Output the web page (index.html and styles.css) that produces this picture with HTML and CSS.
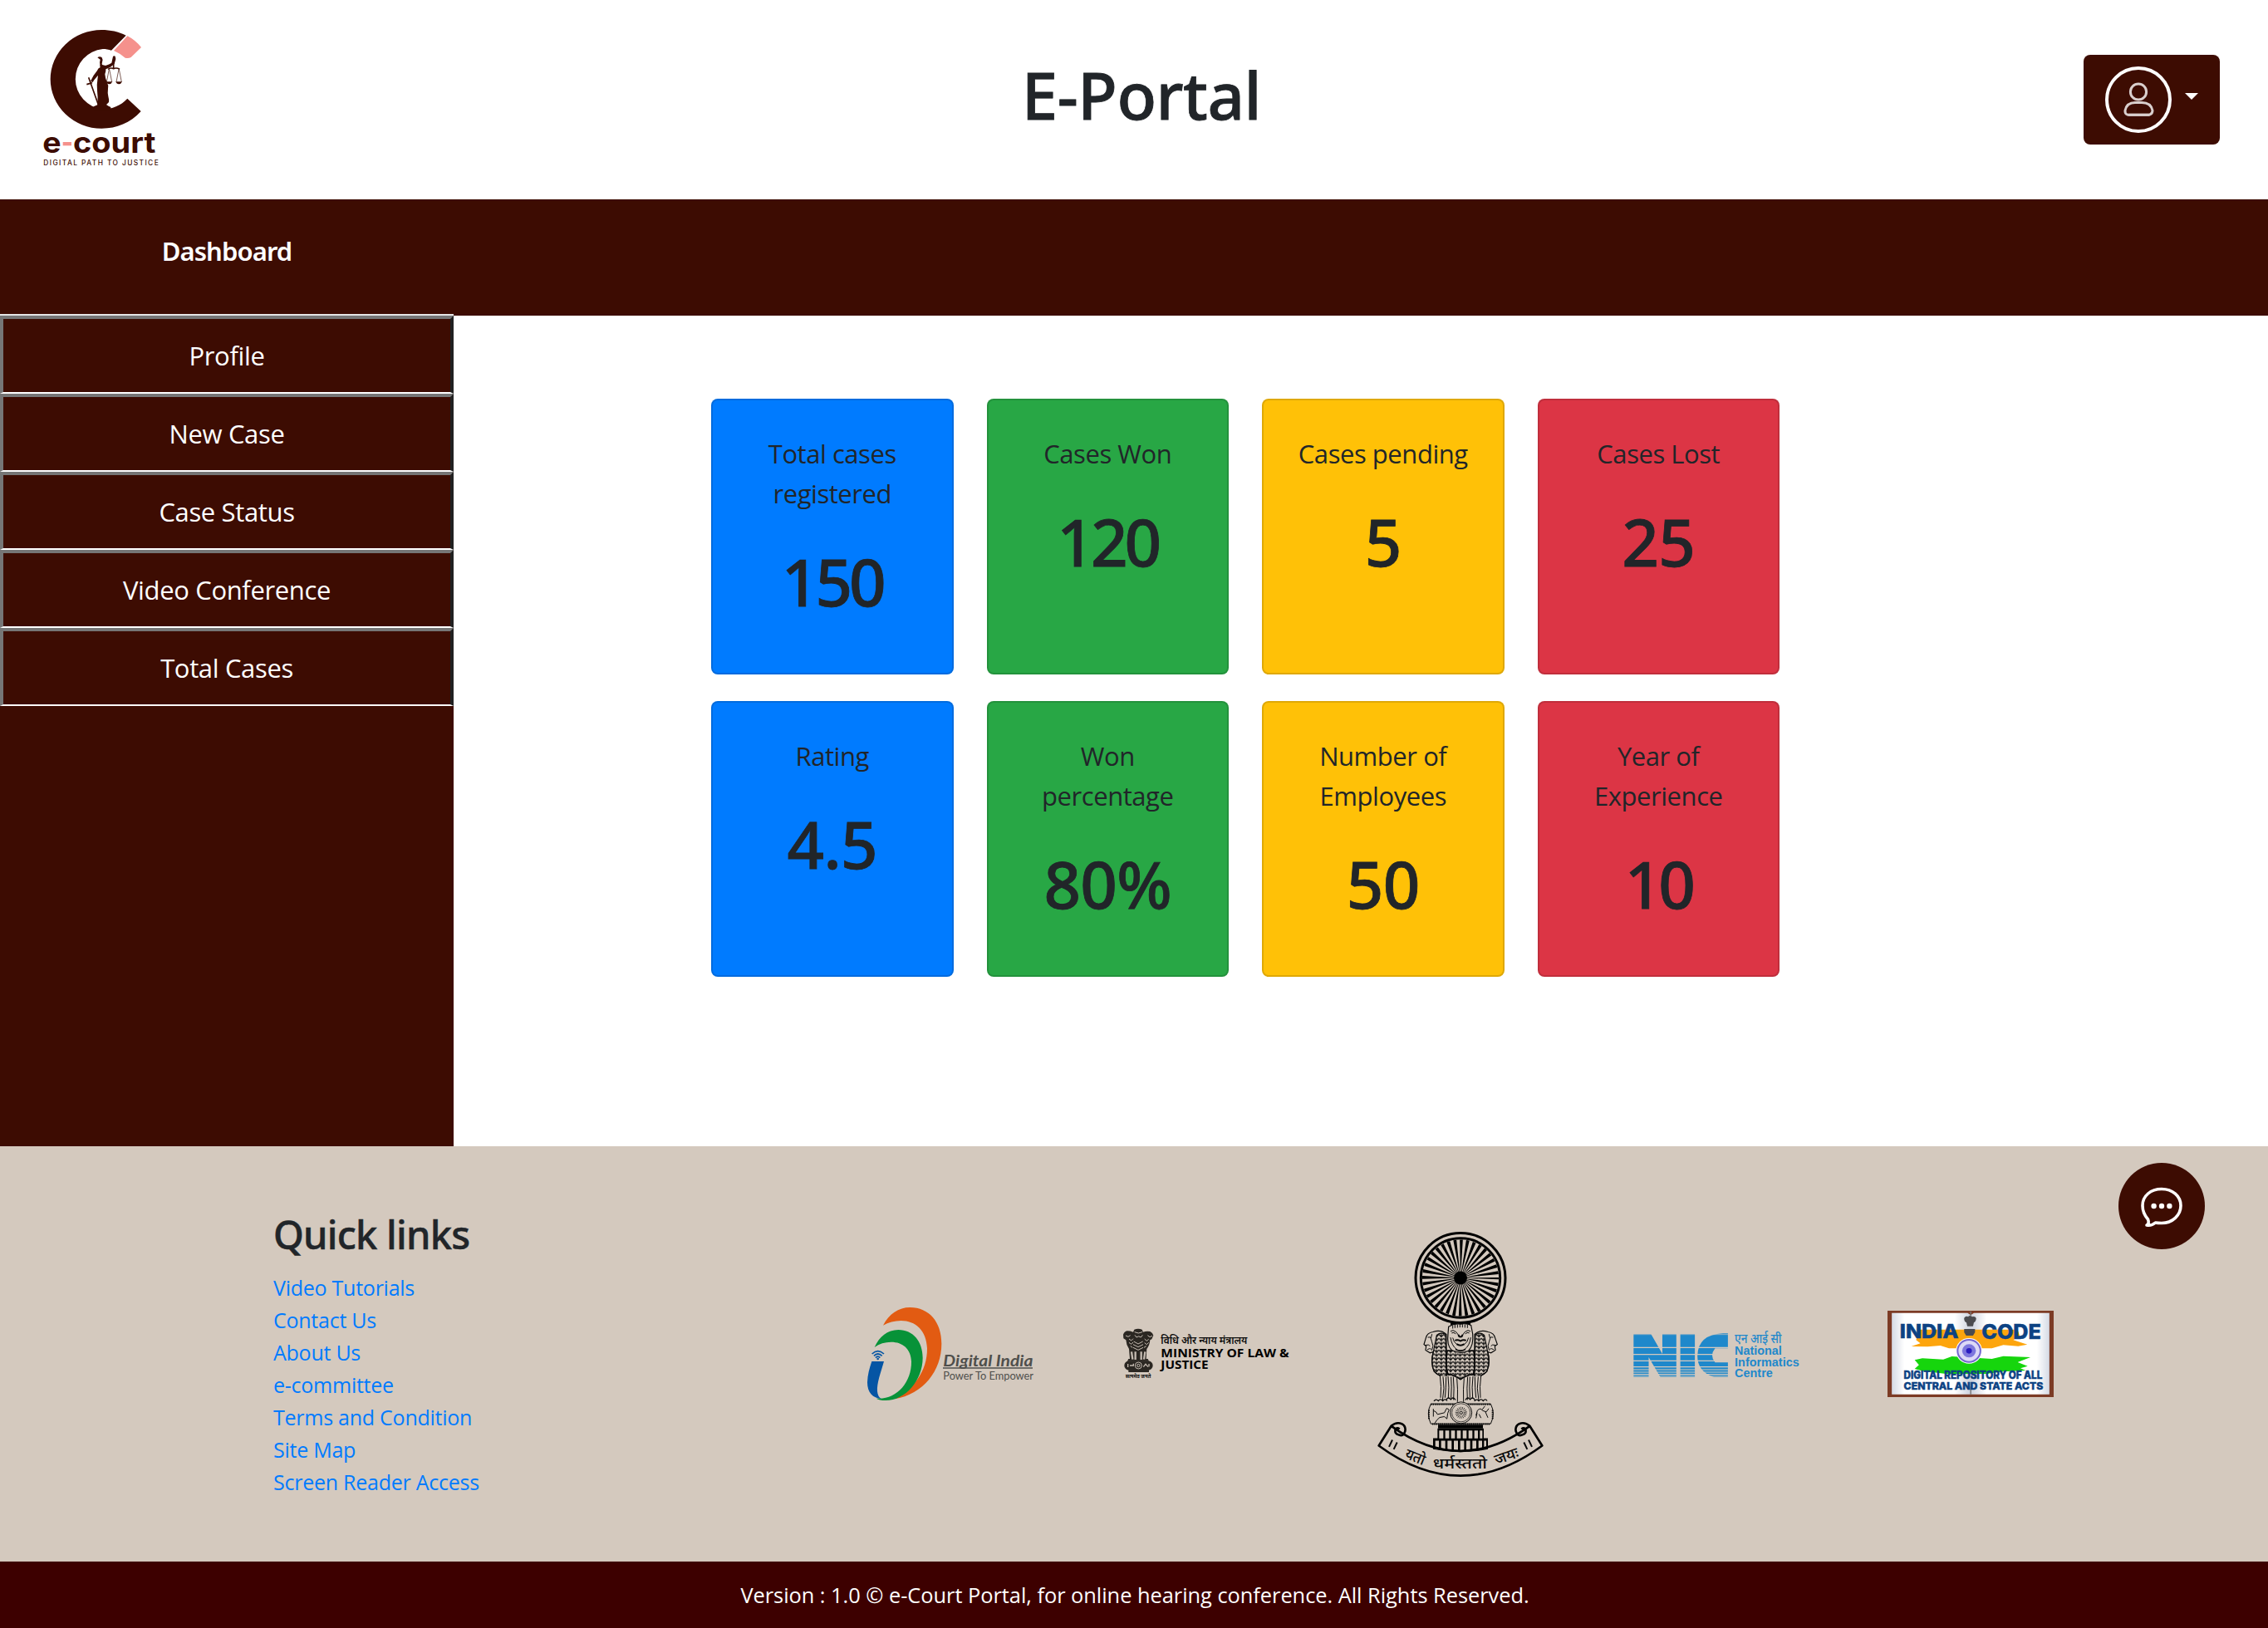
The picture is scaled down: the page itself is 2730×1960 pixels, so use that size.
FILE: index.html
```html
<!DOCTYPE html>
<html lang="en">
<head>
<meta charset="utf-8">
<title>E-Portal</title>
<link rel="stylesheet" href="styles.css">
</head>
<body>
<header class="header">
  <svg class="brand" viewBox="0 0 540 570" role="img" aria-label="e-court">
    <path fill="#3d0c02" d="M365 68C338 54 308 48 277 48A185 178 0 0 0 277 404C332 404 380 384 419 342L370 296C345 322 315 334 281 334A109 109 0 0 1 281 117C292 117 303 119 312 122Z"/>
    <path fill="#f5918c" d="M370 70Q398 84 420 111L383 147Q374 152 362 149Q344 133 321 123Z"/>
    <path fill="#3d0c02" d="M262 148q8-7 16 0q5 8 1 17q-2 6 0 9l12 3q14-4 22-10l5-23q3-4 8-1l2 10l-5 18q-14 14-31 19q1 9-3 18q1 14 7 28q7 12 4 24q-2 16 1 28q4 14 2 21l-9 9q8 6 16 9v10h-62v-12l14-6q2-30-1-52q-2-22 1-38q1-10 2-17q-7 8-14 17l-5 8l-8-4q10-22 24-38q3-9 11-12q-2-5-1-10q-2-8 1-18z"/>
    <g fill="none" stroke="#3d0c02">
      <path stroke-width="5" d="M230 220l38 106M223 245l20-6"/>
      <path stroke-width="5" d="M320 152v35M300 190q10-7 20-2q10-5 22 2"/>
      <path stroke-width="2" d="M304 190l-9 46M305 190l9 46M339 190l-9 46M340 190l9 46"/>
    </g>
    <path fill="#3d0c02" d="M293 235h23q-4 9-12 9t-11-9zM328 235h23q-4 9-12 9t-11-9z"/>
    <g class="brand-name" font-size="104">
      <text x="64" y="491" fill="#3d0c02" textLength="67" lengthAdjust="spacingAndGlyphs">e</text>
      <text x="174" y="491" fill="#3d0c02" textLength="298" lengthAdjust="spacingAndGlyphs">court</text>
    </g>
    <rect x="137" y="453" width="31" height="13" fill="#f5918c"/>
    <text class="brand-tag" x="67" y="538" font-size="25" fill="#3d0c02" textLength="415">DIGITAL PATH TO JUSTICE</text>
  </svg>
  <h1 class="title">E-Portal</h1>
  <button class="user" type="button" aria-label="Account">
    <svg class="avatar" viewBox="0 0 80 80">
      <circle cx="40" cy="40" r="38" fill="none" stroke="#fff" stroke-width="4"/>
      <g fill="none" stroke="#d9cfcd" stroke-width="3">
        <circle cx="40" cy="30.5" r="9.6"/>
        <path d="M27 58.2Q23.500 57 24 53Q26 43.500 36 43.500H44Q55 43.500 57 53Q57 57 53.500 58.200Z"/>
        <path d="M28 58.300H53"/>
      </g>
    </svg>
    <span class="caret"></span>
  </button>
</header>

<div class="topbar"><div class="topbar-label">Dashboard</div></div>

<div class="main">
  <aside class="sidebar">
    <ul class="menu">
      <li class="menu-item">Profile</li>
      <li class="menu-item">New Case</li>
      <li class="menu-item">Case Status</li>
      <li class="menu-item">Video Conference</li>
      <li class="menu-item">Total Cases</li>
    </ul>
  </aside>
  <main class="cards">
    <section class="card blue"><p class="label">Total cases registered</p><p class="value tight">150</p></section>
    <section class="card green"><p class="label">Cases Won</p><p class="value tight">120</p></section>
    <section class="card yellow"><p class="label">Cases pending</p><p class="value">5</p></section>
    <section class="card red"><p class="label">Cases Lost</p><p class="value">25</p></section>
    <section class="card blue"><p class="label">Rating</p><p class="value">4.5</p></section>
    <section class="card green"><p class="label">Won percentage</p><p class="value">80%</p></section>
    <section class="card yellow"><p class="label">Number of Employees</p><p class="value">50</p></section>
    <section class="card red"><p class="label">Year of Experience</p><p class="value tight">10</p></section>
  </main>
</div>

<footer class="footer">
  <nav class="links">
    <h2 class="links-title">Quick links</h2>
    <a class="link">Video Tutorials</a>
    <a class="link">Contact Us</a>
    <a class="link">About Us</a>
    <a class="link">e-committee</a>
    <a class="link">Terms and Condition</a>
    <a class="link">Site Map</a>
    <a class="link">Screen Reader Access</a>
  </nav>
  <div class="logos">
    <svg class="logo logo-di" viewBox="69 72 606 336" role="img" aria-label="Digital India">
      <path fill="#e25b12" d="M129 137C150 96 185 72 226 72C295 72 340 125 340 203C340 300 275 385 170 403C235 370 289 305 288 220C286 155 245 120 194 120C170 120 148 127 129 137Z"/>
      <path fill="#079238" d="M98 216C115 178 145 153 184 153C238 153 272 196 272 254C272 335 210 408 138 408C122 408 112 405 104 401C175 408 232 345 231 268C230 222 200 197 158 197C135 197 115 203 98 216Z"/>
      <path fill="#0555a4" d="M88 267H132C120 310 106 345 108 375Q110 395 122 402C92 400 72 380 72 343C73 315 80 290 88 267Z"/>
      <g fill="none" stroke="#0555a4" stroke-width="5"><path d="M89 240Q110 220 132 240M96 247Q110 233 125 247M102 254Q110 245 118 254"/></g>
      <circle cx="110" cy="258" r="4" fill="#0555a4"/>
      <text class="di-name" x="346" y="284" font-size="58" fill="#4f4f4c" textLength="324" lengthAdjust="spacingAndGlyphs">Digital India</text>
      <path d="M345 291H669" stroke="#4f4f4c" stroke-width="4"/>
      <text class="di-tag" x="346" y="332" font-size="38" fill="#4f4f4c" textLength="326" lengthAdjust="spacingAndGlyphs">Power To Empower</text>
    </svg>

    <svg class="logo logo-law" viewBox="36 60 600 180" role="img" aria-label="Ministry of Law and Justice">
      <g fill="#2b2722">
        <path d="M76 62q14-6 28 0l4 9q12-5 25-2q10 5 12 14l-6 14l-6 3q-1 18-12 32l-2 36h6l4 8h-78l4-8h5l-3-36q-10-14-11-32l-9-6l-1-14q4-11 14-13q12 0 22 4z"/>
        <rect x="40" y="175" width="103" height="34" rx="17"/>
        <rect x="55" y="207" width="74" height="9"/>
      </g>
      <g fill="none" stroke="#c4bab0" stroke-width="3">
        <path d="M77 71q14 8 28 0M78 82l6 8q8-7 16 0l6-8M45 84l9 4l8-5M124 83l8 6l9-4M74 105l16 9l17-9M72 116l18 9l18-9M57 96l8 6l7-7M57 109l8 6l7-7M113 96l8 7l7-6M113 110l8 6l7-7M62 122l8 5M119 122l-8 5M72 127l18 9l18-9"/>
        <path stroke-width="7" d="M66 142l4 28M80 142v29M101 142v29M115 142l-4 28"/>
        <circle cx="91" cy="192" r="12"/><circle cx="91" cy="192" r="5"/>
        <path stroke-width="4" d="M53 186v12M60 192h13v-7M109 197l8-10l9 10M129 186v10"/>
      </g>
      <g class="deva" fill="#0d0d0d">
        <text x="44" y="238" font-size="18" font-weight="700" textLength="92" lengthAdjust="spacingAndGlyphs">सत्यमेव जयते</text>
        <text x="172" y="115" font-size="38" font-weight="600" textLength="312" lengthAdjust="spacingAndGlyphs">विधि और न्याय मंत्रालय</text>
      </g>
      <g class="law-name" font-size="43" fill="#000">
        <text x="172" y="162" textLength="463" lengthAdjust="spacingAndGlyphs">MINISTRY OF LAW &amp;</text>
        <text x="172" y="205" textLength="172" lengthAdjust="spacingAndGlyphs">JUSTICE</text>
      </g>
    </svg>

    <svg class="logo logo-court" viewBox="54 34 600 890" role="img" aria-label="Supreme Court of India">
      <defs>
        <pattern id="mane" width="17" height="14" patternUnits="userSpaceOnUse" patternTransform="translate(4 0)">
          <path d="M0 1L8.500 10L17 1M8.500 0V7" fill="none" stroke="#0a0a0a" stroke-width="3.600"/>
        </pattern>
      </defs>
      <circle cx="354" cy="203" r="162" fill="none" stroke="#000" stroke-width="9"/>
      <circle cx="354" cy="203" r="143" fill="none" stroke="#000" stroke-width="9"/>
      <circle cx="354" cy="203" r="69" fill="none" stroke="#000" stroke-width="138" pathLength="36" stroke-dasharray=".48 .52" stroke-dashoffset=".24"/>
      <circle cx="354" cy="203" r="24"/>
      <path d="M318 366h72v8h-72z"/>
      <g stroke="#0a0a0a" stroke-width="3.500" fill="#d4c9be">
        <path d="M303 407Q283 388 255 398Q233 401 229 420L222 443L230 450L228 464L244 474L256 470Q244 510 259 541Q280 564 304 557Z"/>
        <path d="M405 407Q425 388 453 398Q475 401 479 420L487 443L478 450L480 464L464 474L452 470Q464 510 449 541Q428 564 404 557Z"/>
        <path fill="url(#mane)" d="M300 407Q283 398 268 410L258 460Q244 510 259 541Q280 564 304 557Z"/>
        <path fill="url(#mane)" d="M408 407Q425 398 440 410L450 460Q464 510 449 541Q428 564 404 557Z"/>
        <path stroke="none" d="M282 556L281 630Q270 640 256 640V655H452V640Q438 638 428 630L427 556L400 558H308Z"/>
        <path d="M306 466Q299 520 309 553Q331 552 354 570Q377 552 400 553Q409 520 402 466Z"/>
        <path fill="url(#mane)" d="M306 466Q299 520 309 553Q331 552 354 570Q377 552 400 553Q409 520 402 466Z"/>
        <path d="M311 379Q332 366 354 370Q376 366 392 374L398 405Q402 447 383 466Q354 480 322 464Q304 447 309 405Z"/>
      </g>
      <g fill="none" stroke="#0a0a0a" stroke-width="3">
        <path d="M326 374v12M334 371v13M343 371v12M352 370v12M361 370v12M370 371v12M379 372v12"/>
        <path d="M318 396q8-8 20 2l9 12M390 396q-8-8-20 2l-9 12M322 402q8-4 15 3M386 402q-8-4-15 3M318 418q4 30 22 43M391 418q-4 30-22 43M326 419q3 17 15 24M383 419q-3 17-15 24"/>
        <path stroke-width="6" d="M347 408q0 8 7 8t7-8M334 429q10-4 20 2q10-6 20-2M340 442q14 9 28 0M336 461q18 10 36 0"/>
        <path d="M236 418q8-4 12 3M228 446q12-4 16 3M234 462q8-6 14-2M251 406q-8 16 0 29t-1 30M472 418q-8-4-12 3M480 446q-12-4-16 3M474 462q-8-6-14-2M457 406q8 16 0 29t1 30"/>
        <path d="M280 556q6 40 2 80M291 560q7 40-2 86M302 560q0 42-4 76M309 558q5 40 1 80M320 560q3 36 0 76M328 560q4 40 1 84M341 565q4 38 2 86M367 565q-4 38-2 86M380 560q-4 40-1 84M388 560q-3 36 0 76M399 558q-5 40-1 80M406 560q0 42 4 76M418 560q-7 40 2 86M428 556q-6 40-2 80"/>
        <path stroke-width="4" d="M258 648q8-10 16-1q8-10 16 0q8-10 16 0M302 644q8-14 17-2q8-12 17 2M372 644q8-14 17-2q8-12 17 2M404 648q8-10 16-1q8-10 16 0q8-10 14 0"/>
        <path d="M247 658H463Q481 693 463 730H247Q229 693 247 658Z"/>
        <path stroke-width="6" stroke-dasharray="4 3" d="M247 660H463M252 731H459M240 680v32M470 680v32"/>
        <circle cx="356" cy="690" r="39" fill="#d4c9be"/><circle cx="356" cy="690" r="33" stroke-width="2"/><circle cx="356" cy="690" r="5"/>
        <circle cx="356" cy="690" r="15" stroke-width="12" stroke-dasharray="1.600 3.600"/>
        <path d="M256 682q12 4 15 14l25-6l8-16l9 5l-5 13l-3 20l-9-8l-17 3l-10 9l-8 12M256 676v28M410 700l5-18q12-12 18 0l14 5l9-12M414 690l-4 20M421 695l7 14M444 687l9 21M433 678l9-12"/>
      </g>
      <path d="M273 733h162v14h-162z"/>
      <path d="M271 747H438V782H453V822Q354 842 255 822V782H271Z"/>
      <path fill="#d4c9be" d="M277 754h15v29h-15zM299 754h14v29h-14zM320 754h14v29h-14zM341 754h14v29h-14zM362 754h14v29h-14zM383 754h14v29h-14zM404 754h13v29h-13zM424 754h9v29h-9zM263 791h13v31l-13-2zM284 791h15v35l-15-2zM307 791h15v37l-15-1zM330 791h15v38h-15zM353 791h14v38h-14zM375 791h14v37l-14 1zM397 791h14v34l-14 2zM419 791h13v31l-13 2zM439 791h8v28l-8 2z"/>
      <g fill="none" stroke="#000" stroke-width="8">
        <path d="M104 738Q354 918 604 738L649 809Q354 1026 59 809Z" stroke-linejoin="round"/>
        <path d="M104 738Q122 722 142 730Q158 739 154 757Q148 777 132 770Q115 766 119 751Q124 741 134 749M604 738Q586 722 566 730Q550 739 554 757Q560 777 576 770Q593 766 589 751Q584 741 574 749"/>
      </g>
      <g class="deva" font-size="54" font-weight="500" fill="#0a0a0a" text-anchor="middle">
        <path d="M108 788l-12 25M125 797l-12 25M600 788l12 25M583 797l12 25" stroke="#0a0a0a" stroke-width="6"/>
        <text transform="translate(184 866) rotate(22)" textLength="74" lengthAdjust="spacingAndGlyphs">यतो</text>
        <text transform="translate(352 890)" textLength="196" lengthAdjust="spacingAndGlyphs">धर्मस्ततो</text>
        <text transform="translate(526 864) rotate(-20)" textLength="88" lengthAdjust="spacingAndGlyphs">जयः</text>
      </g>
    </svg>

    <svg class="logo logo-nic" viewBox="45 126 583 168" preserveAspectRatio="none" role="img" aria-label="National Informatics Centre">
      <path fill="#1f88cb" d="M46 138H107L147 210V138H196V294H140L99 222V294H46ZM210 138H261V294H210ZM377 136V190H332Q312 216 332 241H377V294H328Q270 275 270 217Q272 140 360 136Z"/>
      <path stroke="#d4c9be" stroke-width="2" d="M45 140H380"/>
      <path stroke="#d4c9be" stroke-width="3.500" d="M45 187H380M45 212H380M45 235H380M45 257H380M45 267H380M45 276H380M45 284H380M45 291H380"/>
      <text class="deva" x="401" y="171" font-size="48" font-weight="500" fill="#1f88cb" textLength="164" lengthAdjust="spacingAndGlyphs">एन आई सी</text>
      <g class="nic-name" font-size="43" fill="#1f88cb">
        <text x="401" y="214" textLength="165" lengthAdjust="spacingAndGlyphs">National</text>
        <text x="401" y="254" textLength="226" lengthAdjust="spacingAndGlyphs">Informatics</text>
        <text x="401" y="293" textLength="133" lengthAdjust="spacingAndGlyphs">Centre</text>
      </g>
    </svg>

    <svg class="logo logo-code" viewBox="935 54 581 312" preserveAspectRatio="none" role="img" aria-label="India Code">
      <defs>
        <linearGradient id="page"><stop offset="0" stop-color="#d5dae5"/><stop offset=".08" stop-color="#fff"/><stop offset=".4" stop-color="#fff"/><stop offset=".5" stop-color="#cbd0dc"/><stop offset=".6" stop-color="#fff"/><stop offset=".92" stop-color="#fff"/><stop offset="1" stop-color="#d5dae5"/></linearGradient>
        <filter id="soft" x="-5%" y="-5%" width="110%" height="110%"><feGaussianBlur stdDeviation="1.800"/></filter>
      </defs>
      <path fill="#7c3b25" d="M935 54h581v312H935z"/>
      <g filter="url(#soft)">
        <path fill="url(#page)" d="M950 62H1215L1226 70L1237 62H1501V356H950Z"/>
        <path fill="#fff" d="M1030 160h370v70h-370z"/>
        <path fill="#fda50a" d="M1046 122H1390L1397 145L1375 160L1424 176L1392 182L1340 178L1300 190H1150L1120 180L1075 184L1018 183L1050 172L1035 160Z"/>
        <path fill="#12d508" d="M1057 226L1130 230L1160 219L1300 228L1340 218L1435 222L1390 240L1425 254L1400 262L1418 270L1340 274L1280 282H1140L1060 272L1030 264L1045 250L1030 232Z"/>
        <circle cx="1220" cy="199" r="46" fill="#fff"/>
        <circle cx="1220" cy="199" r="40" fill="#dcd9f7" stroke="#7568d0" stroke-width="6"/>
        <circle cx="1220" cy="199" r="24" fill="#7d77dd"/><circle cx="1220" cy="199" r="10" fill="#2a1fc0"/>
        <path fill="#4c4c50" d="M1203 80q6-9 14-4q6-8 14 0q10-4 14 5q0 12-8 16l-3 13h-20l-3-13q-9-5-8-17zM1203 120h38v12l-7 12h-24l-7-12z"/>
        <path stroke="#777" stroke-width="4" d="M1226 56v18M1226 328v28"/>
      </g>
      <g class="code-name" fill="#0c4283" stroke="#0c4283" stroke-width="1.500">
        <text x="978" y="153" font-size="70" textLength="205" lengthAdjust="spacingAndGlyphs">INDIA</text>
        <text x="1264" y="155" font-size="73" textLength="208" lengthAdjust="spacingAndGlyphs">CODE</text>
        <text x="992" y="299" font-size="38" textLength="484" lengthAdjust="spacingAndGlyphs">DIGITAL REPOSITORY OF ALL</text>
        <text x="992" y="338" font-size="37" textLength="487" lengthAdjust="spacingAndGlyphs">CENTRAL AND STATE ACTS</text>
      </g>
    </svg>
  </div>
</footer>
<div class="copyright">Version : 1.0 © e-Court Portal, for online hearing conference. All Rights Reserved.</div>

<button class="chat" type="button" aria-label="Chat">
  <svg viewBox="0 0 104 104">
    <path d="M35.500 68Q29 60.500 29 51.500C29 39.500 39 31.500 52 31.500S75 40 75 51.500S65 72.500 52 72.500Q47 72.500 44.500 72Q40 76 34 75Q37.500 73 35.500 68Z" fill="none" stroke="#fff" stroke-width="3.600" stroke-linejoin="round"/>
    <g fill="#fff"><circle cx="42.600" cy="52" r="3.200"/><circle cx="52" cy="52" r="3.200"/><circle cx="61.400" cy="52" r="3.200"/></g>
  </svg>
</button>
</body>
</html>
```
FILE: styles.css
```css
* { box-sizing: border-box; }

body {
  margin: 0;
  background: #fff;
  color: #212529;
  font-family: "Open Sans", "Noto Sans", sans-serif;
  font-size: 31px;
}

h1, h2, p, ul { margin: 0; padding: 0; }

button { border: 0; padding: 0; font: inherit; }

/* Header */
.header {
  height: 240px;
  display: grid;
  grid-template-columns: 180px 1fr 164px;
  align-items: center;
  padding: 0 58px 0 30px;
}
.brand { width: 180px; height: 190px; margin-bottom: 10px; }
.brand-name { font-family: Inter, sans-serif; font-weight: 700; }
.brand-tag { font-family: Inter, sans-serif; font-weight: 500; }
.title {
  margin-bottom: 12px;
  padding-left: 30px;
  text-align: center;
  font: 500 78px/96px "Noto Sans", sans-serif;
  letter-spacing: -0.5px;
  -webkit-text-stroke: 0.8px currentColor;
}
.user {
  height: 108px;
  display: flex;
  align-items: center;
  gap: 16px;
  padding-left: 26px;
  border-radius: 8px;
  background: #3d0c02;
}
.avatar { width: 80px; height: 80px; }
.caret {
  margin-top: -8px;
  border: 8px solid transparent;
  border-top-color: #fff;
  border-bottom: 0;
}

/* Top bar */
.topbar { height: 140px; background: #3d0c02; }
.topbar-label {
  width: 546px;
  height: 140px;
  border-bottom: 2px solid #e5e5e5;
  color: #fff;
  text-align: center;
  font: 600 31px/124px "Noto Sans", sans-serif;
  letter-spacing: -0.9px;
}

/* Sidebar and cards */
.main { display: flex; height: 1000px; }
.sidebar { width: 546px; background: #3d0c02; }
.menu { list-style: none; }
.menu-item {
  height: 94px;
  border: 4px solid #767676;
  border-right-color: #212121;
  border-bottom: 2px solid #fff;
  color: #fff;
  text-align: center;
  line-height: 88px;
  letter-spacing: -0.35px;
}
.cards {
  display: grid;
  grid-template-columns: repeat(4, 291.5px);
  grid-auto-rows: 332px;
  gap: 32px 40px;
  padding: 100px 0 0 310px;
}
.card {
  padding: 40px 34px;
  border: 2px solid rgba(0, 0, 0, 0.125);
  border-radius: 8px;
  text-align: center;
}
.blue { background: #007bff; }
.green { background: #28a745; }
.yellow { background: #ffc107; }
.red { background: #dc3545; }
.label { line-height: 48px; letter-spacing: -0.45px; }
.value {
  margin-top: 34px;
  font: 500 78px/96px "Noto Sans", sans-serif;
  letter-spacing: -0.7px;
  -webkit-text-stroke: 0.8px currentColor;
}
.value.tight { letter-spacing: -4px; }

/* Footer */
.footer {
  height: 500px;
  display: flex;
  background: #d4c9be;
}
.links {
  width: 1043px;
  padding: 77px 0 0 329px;
  display: flex;
  flex-direction: column;
}
.links-title {
  margin-bottom: 16px;
  font: 500 47px/58px "Noto Sans", sans-serif;
  letter-spacing: -0.75px;
  -webkit-text-stroke: 0.5px currentColor;
}
.link {
  color: #007bff;
  font-size: 25px;
  line-height: 39px;
  letter-spacing: -0.25px;
}
.logos {
  display: grid;
  grid-template-columns: repeat(5, 202px);
  gap: 105.25px;
  align-items: center;
}
.logo { width: 200px; display: block; overflow: visible; }
.logo-di { width: 202px; height: 112px; }
.logo-law { height: 60px; margin-left: 2px; }
.logo-court { height: 297px; }
.logo-nic { height: 56px; margin-left: 1px; }
.logo-code { height: 104px; }
.deva { font-family: "Noto Sans", sans-serif; }
.di-name { font-family: Lato, sans-serif; font-weight: 700; font-style: italic; }
.di-tag { font-family: Lato, sans-serif; font-weight: 400; }
.law-name { font-family: "Open Sans", sans-serif; font-weight: 700; }
.nic-name { font-family: "Liberation Sans", sans-serif; font-weight: 700; }
.code-name { font-family: Inter, sans-serif; font-weight: 800; }

.copyright {
  height: 80px;
  padding-left: 2px;
  background: #3d0000;
  color: #fff;
  text-align: center;
  font-size: 25.4px;
  line-height: 80px;
  letter-spacing: -0.03px;
}

/* Floating chat launcher */
.chat {
  position: fixed;
  left: 2550px;
  top: 1400px;
  width: 104px;
  height: 104px;
  border-radius: 50%;
  background: #3d0c02;
}
```
